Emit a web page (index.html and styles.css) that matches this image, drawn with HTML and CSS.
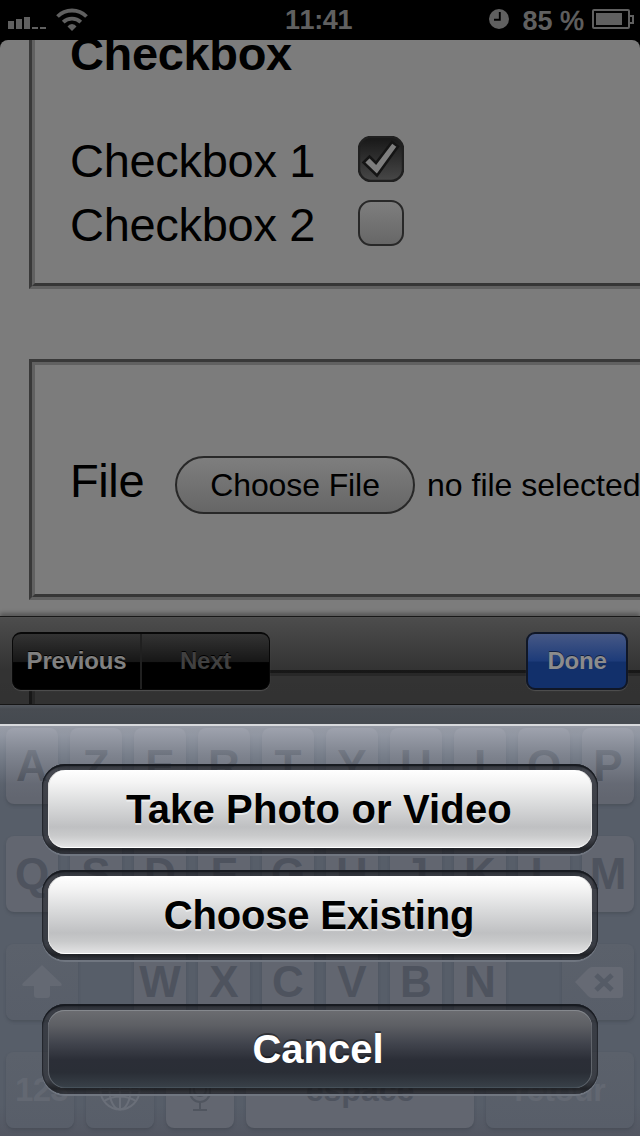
FILE: index.html
```html
<!DOCTYPE html>
<html lang="en">
<head>
<meta charset="utf-8">
<title>File upload</title>
<link rel="stylesheet" href="styles.css">
</head>
<body>
<div class="screen">
  <header class="status">
    <div class="status-left">
      <svg width="90" height="40" viewBox="0 0 90 40" fill="#606060">
        <path d="M8 21h6v8H8zM16 19h6v10h-6zM24 17h6v12h-6zM32 27h6v2h-6zM40 27h6v2h-6z"/>
        <path d="M72 31l-4.500-4.500q1.500-2.500 4.500-2.500t4.500 2.500z"/>
        <path d="M57.500 16.500a20.500 20.500 0 0 1 29 0M63.200 22.200a12.500 12.500 0 0 1 17.600 0" fill="none" stroke="#606060" stroke-width="3.800"/>
      </svg>
    </div>
    <div class="time">11:41</div>
    <div class="status-right">
      <svg width="20" height="20" viewBox="0 0 20 20"><circle cx="10" cy="10" r="10" fill="#606060"/><path d="M10.800 3v7.800H5" fill="none" stroke="#000" stroke-width="1.900"/></svg>
      <span class="percent">85 <i>%</i></span>
      <svg class="battery" width="42" height="20" viewBox="0 0 42 20"><rect x="1" y="1" width="36" height="18" rx="1" fill="none" stroke="#606060" stroke-width="2"/><path d="M4 4h26v12H4z" fill="#606060"/><path d="M38 7h3v7h-3" fill="none" stroke="#606060" stroke-width="2"/></svg>
    </div>
  </header>

  <main class="page">
    <section class="fieldset checks"><div class="inner">
      <h2>Checkbox</h2>
      <div class="row"><span class="label">Checkbox 1</span>
        <svg width="46" height="46" viewBox="0 0 46 46">
          <defs><linearGradient id="dark" x2="0" y2="1"><stop stop-color="#171717"/><stop offset="1" stop-color="#484848"/></linearGradient></defs>
          <rect x="1" y="1" width="44" height="44" rx="12" fill="url(#dark)" stroke="#202020" stroke-width="2.500"/>
          <path d="M5.500 26.500l6-6 6.500 6.500L34 6l6 4.500L19 39.500z" fill="#7e7e7e" stroke="#141414" stroke-width="2.500"/>
        </svg>
      </div>
      <div class="row"><span class="label">Checkbox 2</span><span class="box"></span></div>
    </div></section>
    <section class="fieldset file"><div class="inner">
      <span class="file-label">File</span>
      <span class="choose">Choose File</span>
      <span class="nofile">no file selected</span>
    </div></section>
    <section class="fieldset next-set"><div class="inner"></div></section>
  </main>

  <nav class="toolbar">
    <div class="segments"><span>Previous</span><span class="disabled">Next</span></div>
    <span class="done">Done</span>
  </nav>

  <section class="keyboard">
    <div class="keys"><b>A</b><b>Z</b><b>E</b><b>R</b><b>T</b><b>Y</b><b>U</b><b>I</b><b>O</b><b>P</b></div>
    <div class="keys"><b>Q</b><b>S</b><b>D</b><b>F</b><b>G</b><b>H</b><b>J</b><b>K</b><b>L</b><b>M</b></div>
    <div class="keys third">
      <b class="func wide"><svg width="44" height="36" viewBox="0 0 44 36" fill="#646973"><path d="M22 1L41 19q2 3-1 3H30v9q0 3-3 3H17q-3 0-3-3v-9H4q-3 0-1-3z"/></svg></b>
      <div class="letters"><b>W</b><b>X</b><b>C</b><b>V</b><b>B</b><b>N</b></div>
      <b class="func wide del"><svg width="48" height="31" viewBox="0 0 48 31"><path d="M0 15L13 2q2-2 4-2h28q3 0 3 3v25q0 3-3 3H17q-2 0-4-2z" fill="#666a74"/><path d="M21 8l16 15M37 8L21 23" stroke="#555b66" stroke-width="5"/></svg></b>
    </div>
    <div class="keys fourth">
      <b class="func small">123</b>
      <b class="func"><svg width="42" height="42" viewBox="0 0 42 42" fill="none" stroke="#6a6f79" stroke-width="2"><circle cx="21" cy="21" r="19.500"/><path d="M21 1v40M1 21h40M5 10q16 9 32 0M5 32q16-9 32 0"/><ellipse cx="21" cy="21" rx="10.500" ry="19.500"/></svg></b>
      <b class="mic"><svg width="24" height="44" viewBox="0 0 24 44" fill="none" stroke="#50555f" stroke-width="2"><rect x="6" y="1" width="12" height="27" rx="6"/><path d="M2 18v6a10 10 0 0 0 20 0v-6M12 34v7M5 42h14"/></svg></b>
      <b class="space">espace</b>
      <b class="func return">retour</b>
    </div>
  </section>

  <aside class="sheet">
    <div class="well"><div class="action photo">Take Photo or Video</div></div>
    <div class="well"><div class="action existing">Choose Existing</div></div>
    <div class="well last"><div class="action cancel">Cancel</div></div>
  </aside>
</div>
</body>
</html>
```
FILE: styles.css
```css
* { box-sizing: border-box; }
body { margin: 0; background: #000; font-family: "Liberation Sans", Arial, sans-serif; }
.screen { position: relative; width: 640px; height: 1136px; overflow: hidden; background: #000; display: flex; flex-direction: column; }
.screen svg { display: block; flex: none; }

.status { height: 40px; flex: none; display: grid; grid-template: 40px / 1fr auto 1fr; color: #606060; font-weight: bold; font-size: 27px; line-height: 40px; }
.time { font-kerning: none; letter-spacing: -0.4px; margin-right: 3px; }
.status-right { display: flex; justify-content: flex-end; align-items: center; padding: 0 6px 2px 0; }
.percent { margin: 3px 8px 0 13px; height: 40px; white-space: nowrap; }
.percent i { font-style: normal; font-weight: normal; -webkit-text-stroke: 0.7px #606060; }

.page { height: 665px; flex: none; overflow: hidden; background: #7c7c7c; border-radius: 8px 8px 0 0; padding-left: 29px; color: #000; }
.fieldset { width: 640px; border: solid #393939; border-width: 3px; border-bottom-color: #616161; }
.inner { height: 100%; border: 3px solid #616161; border-bottom-color: #363636; padding-left: 35px; }
.checks { height: 249px; border-top: 0; }
.checks .inner { border-top: 0; }
h2 { margin: 0 0 61px; height: 27px; font-size: 47px; line-height: 27px; letter-spacing: -0.35px; }
.row { height: 64px; display: flex; align-items: center; font-size: 47px; }
.row svg, .box { margin-bottom: 2px; }
.label { width: 288px; flex: none; letter-spacing: -0.3px; line-height: 60px; padding-top: 2px; }
.box { width: 46px; height: 46px; border: 2.5px solid #282828; border-radius: 13px; background: linear-gradient(#7e7e7e, #676767); }
.file { margin-top: 70px; height: 241px; }
.file .inner { display: flex; align-items: center; white-space: nowrap; }
.file-label { width: 105px; padding-top: 2px; flex: none; font-size: 47px; letter-spacing: -0.4px; }
.choose { width: 240px; height: 58px; margin-top: 10px; flex: none; border: 2.5px solid #282828; border-radius: 29px; background: linear-gradient(#7e7e7e, #666); text-align: center; font-size: 32px; line-height: 55px; letter-spacing: -0.1px; }
.nofile { margin: 12px 0 0 12px; font-size: 32px; }
.next-set { margin-top: 70px; height: 240px; }

.toolbar { position: relative; height: 89px; margin-top: -89px; flex: none; padding: 15px 12px 0; display: flex; justify-content: space-between; border-top: 1px solid #181818; border-bottom: 1px solid #161616; background: linear-gradient(rgba(0,0,0,.38), rgba(0,0,0,.59) 60%, rgba(0,0,0,.6)); box-shadow: 0 -3px 4px rgba(0,0,0,.3), inset 0 1px #505050; font-weight: bold; font-size: 24px; letter-spacing: -0.2px; text-align: center; }
.segments, .done { height: 58px; border-radius: 9px; box-shadow: 0 1px 1px #505050; }
.segments { width: 258px; display: flex; overflow: hidden; border: solid #080808; border-width: 2px 1px 1px; background: linear-gradient(#333, #171717 50%, #000 52%); color: #808080; }
.segments span { flex: 1; line-height: 54px; text-shadow: 0 -1px #000; }
.segments .disabled { border-left: 2px solid #202020; color: #404040; }
.done { width: 102px; border: 2px solid #101727; color: #8c8c8c; line-height: 54px; background: linear-gradient(#465885, #1d3b79 50%, #12306b 52%, #12306b); text-shadow: 0 -1px #122040; }

.keyboard { height: 431px; flex: none; padding: 23px 6px 0; display: flex; flex-direction: column; gap: 32px; background: linear-gradient(#565b62, #484c52 4px, #454a50 18px, #575e69 30px, #575e69 400px, #535762); color: #4e535e; }
.keys { display: flex; height: 76px; gap: 12px; }
.keys b { width: 52px; flex: none; display: flex; align-items: center; justify-content: center; font-size: 44px; line-height: 76px; background: #626670; border-radius: 8px; box-shadow: 0 2px 3px rgba(55,60,70,.35); }
.keys:first-child { color: #474c56; }
.third { justify-content: space-between; }
.letters { display: flex; gap: 12px; }
.keys .func { background: linear-gradient(#5b616b, #585e69); color: #636872; }
.keys .wide { width: 72px; }
.keys .del { padding-left: 2px; }
.fourth b { width: 68px; }
.fourth .small { font-size: 33px; padding-left: 3px; letter-spacing: -0.7px; }
.fourth .space { width: 228px; font-size: 32px; }
.fourth .return { width: 148px; font-size: 32px; letter-spacing: -0.2px; }

/* Action sheet, drawn over the dimmed keyboard */
.sheet { position: absolute; left: 0; right: 0; top: 724px; bottom: 0; border-top: 2px solid #d7d9dc; background: linear-gradient(rgba(194,198,210,.65), rgba(180,187,200,.36) 28px, rgba(160,167,185,.06) 58px, transparent 72px); padding: 38px 42px; display: flex; flex-direction: column; gap: 16px; }
.well { height: 90px; flex: none; padding: 6px; border-radius: 23px; background: linear-gradient(rgba(18,20,25,.75), rgba(30,31,36,.52) 7px, rgba(30,31,36,.52) 75px, rgba(18,19,22,.8) 85px, rgba(30,31,36,.6)); box-shadow: 0 2px #707680, inset 0 2px 1px #171a20, inset 1px 0 1px #24272d, inset -1px 0 1px #24272d; }
.last { margin-top: 28px; }
.action { height: 78px; border-radius: 17px; background: linear-gradient(#fff, #f5f5f5 15%, #dadbdc 43%, #bfc0c2 73%, #c9cacb 84%, #e5e5e6); box-shadow: inset 1px 0 #ddd, inset -1px 0 #ddd, inset 0 -1px #fff; text-align: center; font-size: 40px; font-weight: bold; line-height: 79px; color: #000; text-shadow: 0 2px rgba(255,255,255,.5); }
.photo { letter-spacing: 0.15px; padding-right: 2px; }
.existing { letter-spacing: -0.2px; padding-right: 2px; }
.cancel { padding-right: 4px; background: linear-gradient(#6c6d71, #5d5f64 20%, #41444d 43%, #2b2e37 64%, #2a2e36 80%, #394149); box-shadow: inset 0 1px #85888d, inset 1px 0 #61656c, inset -1px 0 #61656c, inset 0 -1px #46515a; color: #fff; text-shadow: 0 -2px rgba(0,0,0,.4); }
```
